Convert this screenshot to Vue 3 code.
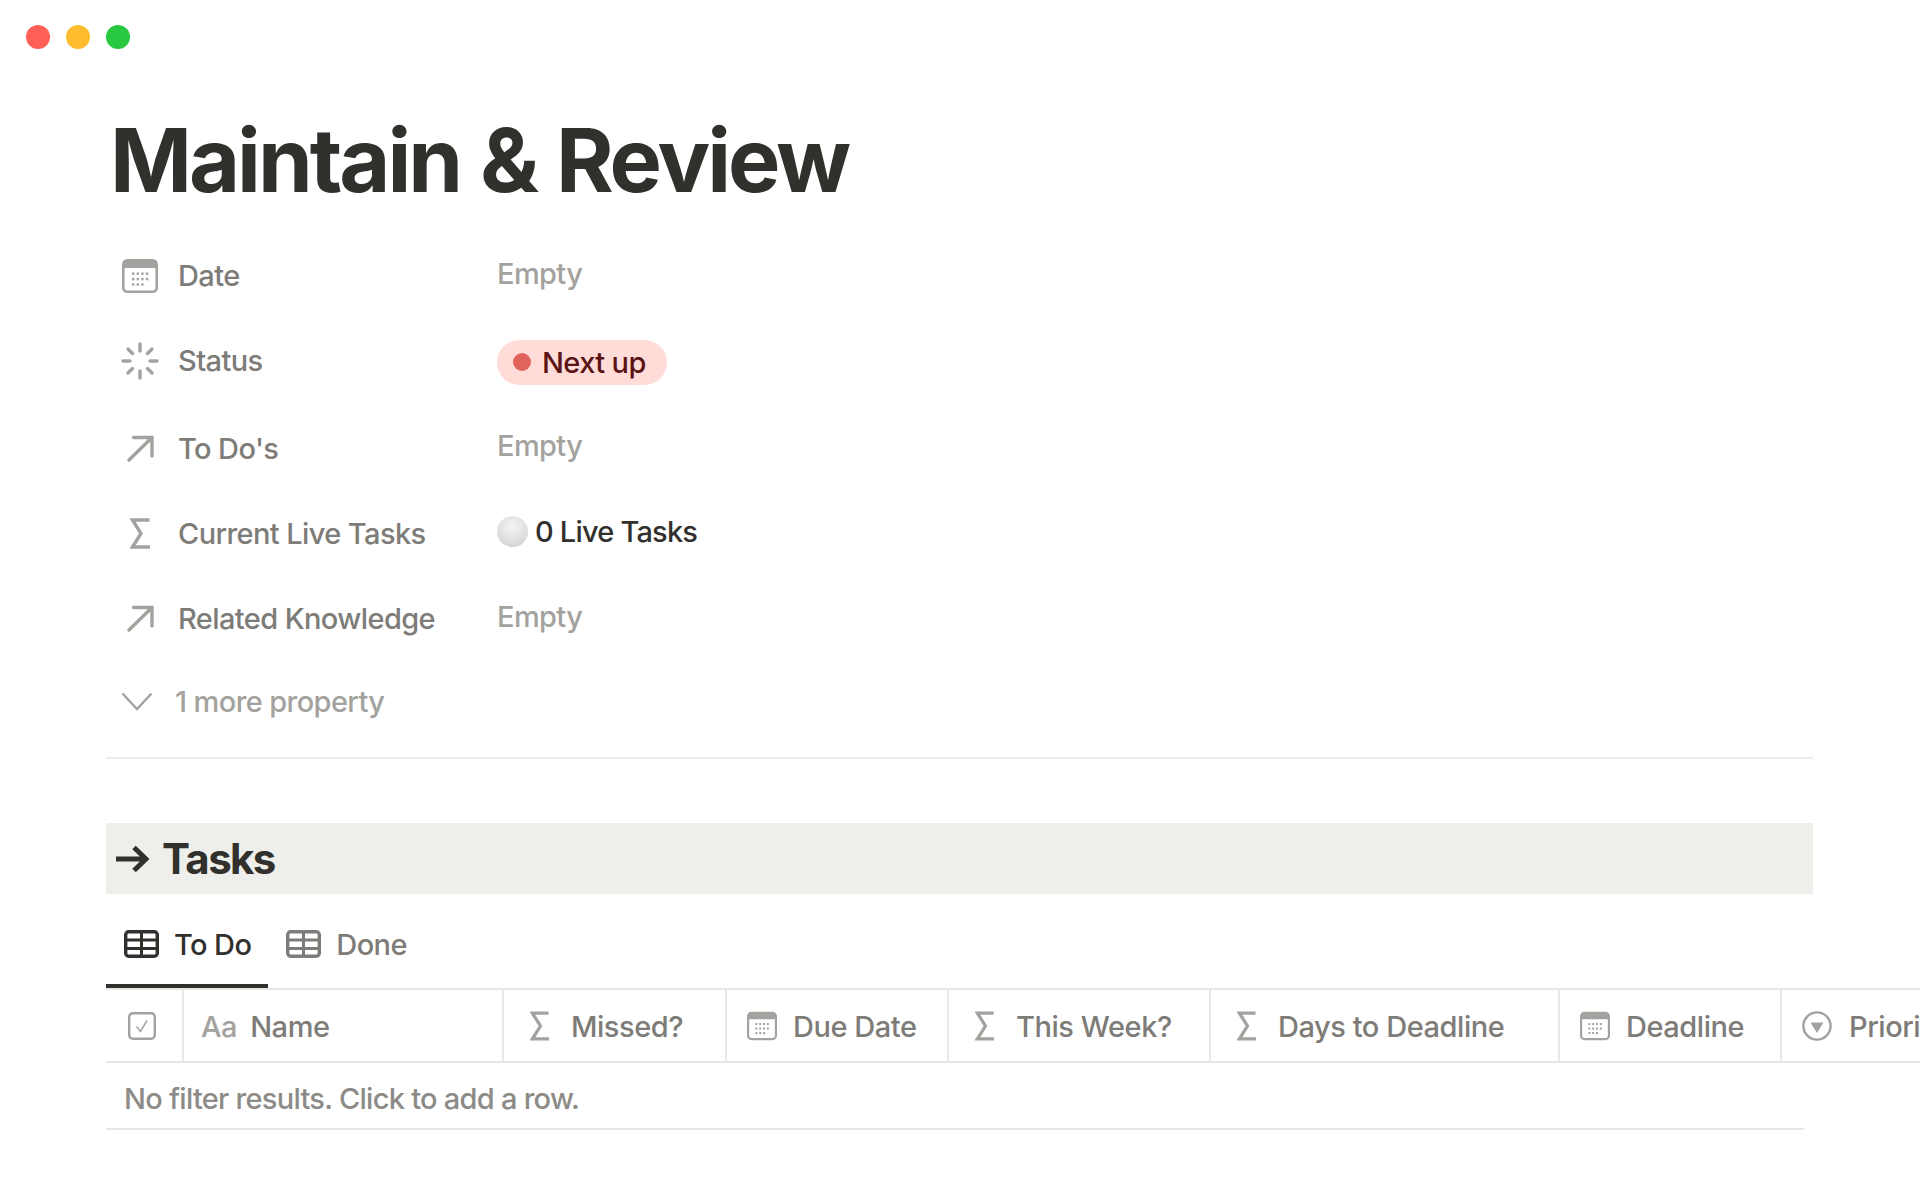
<template>
  <div class="page">
    <svg class="defs" width="0" height="0">
      <symbol id="ico-cal" viewBox="0 0 36 34">
        <rect x="1.3" y="1.3" width="33.4" height="31.4" rx="4" fill="#fff" stroke="#a3a29e" stroke-width="2.6" />
        <path d="M1 9V5a4 4 0 0 1 4-4h26a4 4 0 0 1 4 4v4z" fill="#a3a29e" />
        <g fill="#a3a29e">
          <rect v-for="d in calDots" :key="d.k" :x="d.x" :y="d.y" width="2.4" height="2.4" />
        </g>
      </symbol>
      <symbol id="ico-spin" viewBox="0 0 38 38">
        <g stroke="#a3a29e" stroke-width="3.4" stroke-linecap="round">
          <path d="M19 2v7M19 29v7M2 19h7M29 19h7M7 7l4.5 4.5M26.5 26.5 31 31M31 7l-4.5 4.5M11.5 26.5 7 31" />
        </g>
      </symbol>
      <symbol id="ico-arrow" viewBox="0 0 27 27">
        <path d="M2 25 25 2.5M6.5 2.5H25V21" fill="none" stroke="#a3a29e" stroke-width="3.4" stroke-linecap="round" />
      </symbol>
      <symbol id="ico-sigma" viewBox="0 0 21 31">
        <path d="M19.5 2H2.5l8.5 13.5L2.5 29h17.5" fill="none" stroke="#a3a29e" stroke-width="3.4" />
      </symbol>
      <symbol id="ico-table" viewBox="0 0 35 28">
        <rect x="1.7" y="1.7" width="31.6" height="24.6" rx="3" fill="none" stroke="currentColor" stroke-width="3.4" />
        <path d="M1.7 10h31.6M1.7 18.5h31.6M17.5 1.7v24.6" fill="none" stroke="currentColor" stroke-width="3" />
      </symbol>
      <symbol id="ico-check" viewBox="0 0 28 28">
        <rect x="1.2" y="1.2" width="25.6" height="25.6" rx="3.5" fill="none" stroke="#a3a29e" stroke-width="2.4" />
        <path d="M8.5 14.5l4 5 6.5-11" fill="none" stroke="#a3a29e" stroke-width="1.5" />
      </symbol>
      <symbol id="ico-select" viewBox="0 0 30 30">
        <circle cx="15" cy="15" r="13.6" fill="none" stroke="#a3a29e" stroke-width="2.4" />
        <path d="M8.5 11.5h13L15 22z" fill="#a3a29e" />
      </symbol>
    </svg>

    <div class="traffic">
      <span class="light red"></span>
      <span class="light yellow"></span>
      <span class="light green"></span>
    </div>

    <h1 class="title">Maintain &amp; Review</h1>

    <div class="props">
      <div class="prop">
        <div class="prop-key">
          <span class="prop-icon"><svg class="i-cal"><use href="#ico-cal" /></svg></span>
          <span>Date</span>
        </div>
        <div class="prop-empty">Empty</div>
      </div>
      <div class="prop prop-status">
        <div class="prop-key">
          <span class="prop-icon"><svg class="i-spin"><use href="#ico-spin" /></svg></span>
          <span>Status</span>
        </div>
        <div class="pill"><span class="pill-dot"></span>Next up</div>
      </div>
      <div class="prop prop-todo">
        <div class="prop-key">
          <span class="prop-icon"><svg class="i-arrow"><use href="#ico-arrow" /></svg></span>
          <span>To Do's</span>
        </div>
        <div class="prop-empty">Empty</div>
      </div>
      <div class="prop">
        <div class="prop-key">
          <span class="prop-icon"><svg class="i-sigma"><use href="#ico-sigma" /></svg></span>
          <span>Current Live Tasks</span>
        </div>
        <div class="live"><span class="live-ball"></span>0 Live Tasks</div>
      </div>
      <div class="prop">
        <div class="prop-key">
          <span class="prop-icon"><svg class="i-arrow"><use href="#ico-arrow" /></svg></span>
          <span>Related Knowledge</span>
        </div>
        <div class="prop-empty">Empty</div>
      </div>
      <div class="more">
        <svg class="chev" viewBox="0 0 32 19"><path d="M1.5 1.5 16 17 30.5 1.5" fill="none" stroke="#a3a29e" stroke-width="2.4" /></svg>
        <span>1 more property</span>
      </div>
    </div>

    <div class="divider"></div>

    <div class="band">
      <svg class="band-arrow" viewBox="0 0 34 28"><path d="M1 14h30M19 2.5 31 14 19 25.5" fill="none" stroke="#32302c" stroke-width="5" /></svg>
      <span>Tasks</span>
    </div>

    <div class="tabs">
      <div class="tab active">
        <svg class="i-table"><use href="#ico-table" /></svg>
        <span>To Do</span>
      </div>
      <div class="tab">
        <svg class="i-table"><use href="#ico-table" /></svg>
        <span>Done</span>
      </div>
    </div>

    <div class="thead">
      <div class="th th-check"><svg class="i-check"><use href="#ico-check" /></svg></div>
      <div v-for="col in columns" :key="col.name" class="th" :style="{ width: col.width + 'px' }">
        <span v-if="col.icon === 'aa'" class="aa">Aa</span>
        <svg v-else :class="'th-' + col.icon"><use :href="'#ico-' + col.icon" /></svg>
        <span>{{ col.name }}</span>
      </div>
    </div>

    <div class="empty-row">No filter results. Click to add a row.</div>
  </div>
</template>

<script setup>
const calDots = []
for (let r = 0; r < 3; r++) {
  for (let c = 0; c < 4; c++) {
    if (r === 2 && c === 3) continue
    calDots.push({ k: r + '-' + c, x: 10 + c * 4.6, y: 13.5 + r * 5.4 })
  }
}

const columns = [
  { name: 'Name', icon: 'aa', width: 320 },
  { name: 'Missed?', icon: 'sigma', width: 223 },
  { name: 'Due Date', icon: 'cal', width: 222 },
  { name: 'This Week?', icon: 'sigma', width: 262 },
  { name: 'Days to Deadline', icon: 'sigma', width: 349 },
  { name: 'Deadline', icon: 'cal', width: 222 },
  { name: 'Priority', icon: 'select', width: 220 }
]
</script>

<style>
html, body {
  margin: 0;
  background: #fff;
}
</style>

<style scoped>
.page {
  position: relative;
  width: 1920px;
  height: 1200px;
  box-sizing: border-box;
  padding-left: 106px;
  overflow: hidden;
  background: #fff;
  font-family: Inter, "Liberation Sans", sans-serif;
  font-size: 29px;
  font-weight: 450;
  letter-spacing: -0.6px;
  color: #32302c;
}
.defs {
  position: absolute;
}
.traffic {
  display: flex;
  gap: 16px;
  margin-left: -80px;
  padding-top: 25px;
}
.light {
  width: 24px;
  height: 24px;
  border-radius: 50%;
}
.red { background: #ff5f57; }
.yellow { background: #febc2e; }
.green { background: #28c840; }

.title {
  margin: 58px 0 0 4px;
  font-size: 88px;
  line-height: 106px;
  font-weight: 700;
  letter-spacing: -3px;
  word-spacing: 2px;
  color: #32302c;
}

.props {
  width: 700px;
  margin-top: 20px;
}
.prop {
  display: flex;
  align-items: center;
  height: 85px;
}
.prop-status { height: 87px; }
.prop-status .prop-key { margin-top: -2px; }
.prop-todo { height: 86px; }
.prop-key {
  display: flex;
  align-items: center;
  width: 391px;
  flex: none;
  color: #7d7c78;
}
.prop-icon {
  display: flex;
  align-items: center;
  justify-content: center;
  width: 38px;
  margin: 0 19px 0 15px;
  flex: none;
}
.i-cal { width: 36px; height: 34px; }
.i-spin { width: 38px; height: 38px; }
.i-arrow { width: 27px; height: 27px; }
.i-sigma { width: 21px; height: 31px; }
.prop-empty {
  color: #a3a29e;
  margin-top: -5px;
}
.pill {
  display: flex;
  align-items: center;
  gap: 11px;
  height: 45px;
  margin-top: 1px;
  padding: 0 21px 0 16px;
  border-radius: 23px;
  background: #ffdcd8;
  color: #5a1414;
}
.pill-dot {
  width: 18px;
  height: 18px;
  border-radius: 50%;
  background: #e0645c;
}
.live {
  display: flex;
  align-items: center;
  gap: 7px;
  margin-top: -5px;
  letter-spacing: -0.8px;
  color: #32302c;
}
.live-ball {
  width: 31px;
  height: 31px;
  border-radius: 50%;
  background: radial-gradient(circle at 50% 35%, #f4f4f4 0%, #dcdcdc 65%, #bdbdbd 100%);
}
.more {
  display: flex;
  align-items: center;
  height: 84px;
  box-sizing: border-box;
  padding: 0 0 4px 15px;
  color: #a3a29e;
}
.chev {
  width: 32px;
  height: 19px;
  margin-right: 22px;
}

.divider {
  width: 1707px;
  height: 2px;
  margin-top: 12px;
  background: #ededec;
}
.band {
  display: flex;
  align-items: center;
  gap: 13px;
  width: 1707px;
  height: 71px;
  box-sizing: border-box;
  margin-top: 64px;
  padding-left: 9px;
  background: #eeeeeb;
  font-size: 42px;
  font-weight: 700;
  letter-spacing: -1.6px;
}
.band-arrow {
  width: 34px;
  height: 28px;
}
.tabs {
  display: flex;
  height: 94px;
}
.tab {
  display: flex;
  align-items: center;
  gap: 15px;
  box-sizing: border-box;
  height: 94px;
  padding: 10px 17px 0 18px;
  border-bottom: 4px solid transparent;
  color: #7d7c78;
}
.tab.active {
  color: #32302c;
  border-bottom-color: #32302c;
}
.i-table { width: 35px; height: 28px; }
.thead {
  display: flex;
  width: 1900px;
  height: 75px;
  box-sizing: border-box;
  border-top: 2px solid #e6e6e5;
  border-bottom: 2px solid #e6e6e5;
  letter-spacing: -0.45px;
  color: #7d7c78;
}
.th {
  display: flex;
  align-items: center;
  flex: none;
  box-sizing: border-box;
  padding-left: 21px;
  border-right: 2px solid #e9e9e8;
  white-space: nowrap;
}
.th span { margin-top: 2px; }
.th:last-child { border-right: 0; }
.th-check {
  width: 78px;
  padding-left: 22px;
}
.i-check { width: 28px; height: 28px; }
.aa {
  color: #a3a29e;
  margin: 0 13px 0 -4px;
}
.th-sigma { width: 20px; height: 30px; margin: 0 21px 0 5px; }
.th-cal { width: 30px; height: 30px; margin: 0 16px 0 -1px; }
.th-select { width: 30px; height: 30px; margin: 0 17px 0 -1px; }
.empty-row {
  display: flex;
  align-items: center;
  width: 1698px;
  height: 67px;
  box-sizing: border-box;
  padding: 5px 0 0 18px;
  border-bottom: 2px solid #e6e6e5;
  letter-spacing: -0.73px;
  color: #8c8b87;
}
</style>
